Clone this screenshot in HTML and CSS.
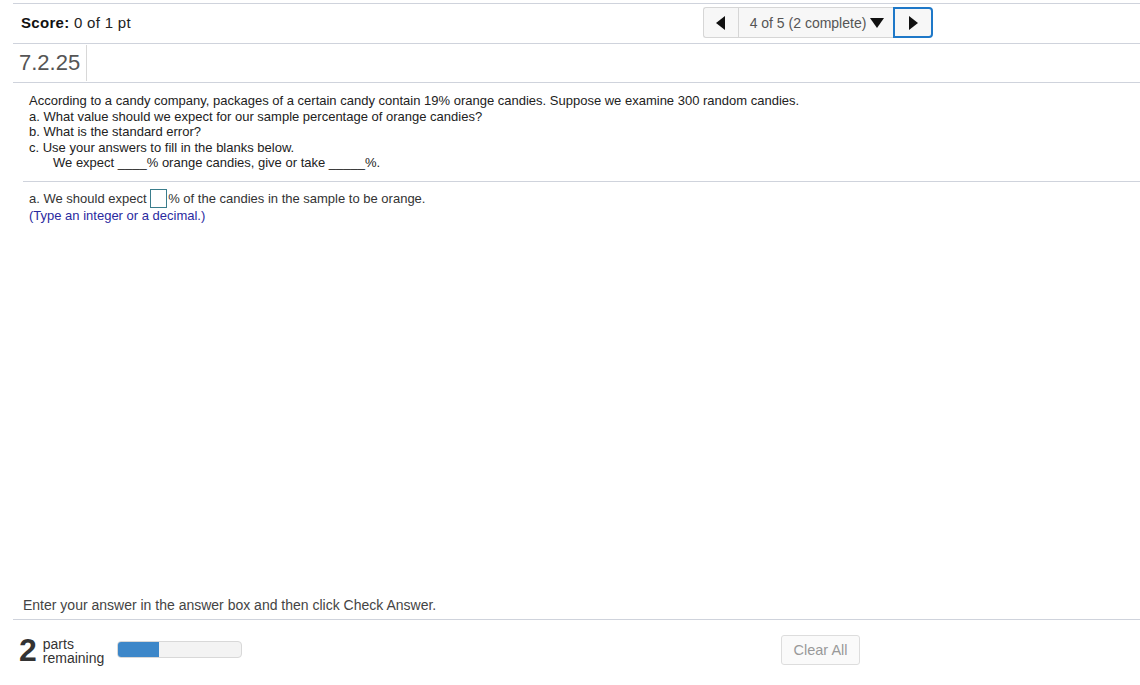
FILE: index.html
```html
<!DOCTYPE html>
<html lang="en">
<head>
  <meta charset="UTF-8">
  <title>Question 7.2.25</title>
  <link rel="stylesheet" href="styles.css">
</head>
<body>
  <div class="page">
    <div class="top-bar">
      <div class="score"><strong>Score:</strong> 0 of 1 pt</div>
      <div class="nav">
        <button class="nav-btn prev" aria-label="Previous question">
          <svg width="10" height="14" viewBox="0 0 10 14"><path d="M9 0 L9 14 L0 7 Z" fill="#111"/></svg>
        </button>
        <button class="nav-menu">4 of 5 (2 complete)
          <svg width="14" height="10" viewBox="0 0 14 10"><path d="M0 0 L14 0 L7 10 Z" fill="#111"/></svg>
        </button>
        <button class="nav-btn next" aria-label="Next question">
          <svg width="10" height="14" viewBox="0 0 10 14"><path d="M1 0 L1 14 L10 7 Z" fill="#111"/></svg>
        </button>
      </div>
    </div>

    <div class="qid-bar">
      <div class="qid">7.2.25</div>
    </div>

    <div class="question">
      <div class="stem">
        <p>According to a candy company, packages of a certain candy contain 19% orange candies. Suppose we examine 300 random candies.</p>
        <p>a. What value should we expect for our sample percentage of orange candies?</p>
        <p>b. What is the standard error?</p>
        <p>c. Use your answers to fill in the blanks below.</p>
        <p class="indent">We expect ____% orange candies, give or take _____%.</p>
      </div>
      <div class="answer">
        <p>a. We should expect <span class="ans-box"></span>% of the candies in the sample to be orange.</p>
        <p class="hint">(Type an integer or a decimal.)</p>
      </div>
    </div>

    <div class="instructions">Enter your answer in the answer box and then click Check Answer.</div>

    <div class="footer">
      <div class="parts">
        <span class="parts-num">2</span>
        <span class="parts-label">parts<br>remaining</span>
      </div>
      <div class="progress"><div class="progress-fill" style="width: 33%"></div></div>
      <button class="clear-btn">Clear All</button>
    </div>
  </div>
</body>
</html>
```

FILE: styles.css
```css
* { box-sizing: border-box; }

body {
  margin: 0;
  background: #ffffff;
  font-family: 'Liberation Sans', Arial, sans-serif;
  color: #222;
}

p { margin: 0; }

.page {
  display: flex;
  flex-direction: column;
  height: 685px;
  margin-left: 13px;
  padding-top: 3px;
}

.top-bar {
  display: flex;
  justify-content: space-between;
  align-items: center;
  height: 41px;
  border-top: 1px solid #cfd3dc;
  border-bottom: 1px solid #cfd3dc;
}

.score {
  padding-left: 8px;
  font-size: 15px;
  letter-spacing: 0.3px;
  color: #222;
  margin-top: -2px;
}

.score strong {
  font-weight: bold;
  color: #111;
}

.nav {
  display: flex;
  height: 31px;
  margin-right: 207px;
  margin-top: -2px;
}

.nav button {
  font-family: 'Liberation Sans', Arial, sans-serif;
  background: #f7f7f7;
  border: 1px solid #d6d6d6;
  height: 31px;
  display: flex;
  align-items: center;
  justify-content: center;
  cursor: pointer;
  padding: 0;
}

.nav-btn.prev {
  width: 35px;
  border-radius: 3px 0 0 3px;
  border-right: none;
}

.nav-menu {
  width: 155px;
  font-size: 14px;
  color: #555;
  gap: 4px;
  border-right: none !important;
  padding-left: 2px !important;
}

.nav-btn.next {
  width: 40px;
  border: 2px solid #1e78c8 !important;
  border-radius: 0 4px 4px 0;
}

.qid-bar {
  height: 39px;
  border-bottom: 1px solid #cfd3dc;
  display: flex;
  align-items: center;
}

.qid {
  font-size: 22px;
  color: #555;
  padding-left: 6px;
  width: 74px;
  height: 36px;
  line-height: 36px;
  border-right: 1px solid #d8d8d8;
}

.question {
  flex: 1;
  font-size: 13px;
}

.stem {
  padding: 10px 0 10px 6px;
  margin-left: 10px;
  line-height: 15.6px;
  color: #222;
  border-bottom: 1px solid #cfd3dc;
}

.indent {
  padding-left: 24px;
}

.answer {
  padding: 7px 0 0 16px;
  line-height: 19px;
  color: #333;
}

.ans-box {
  display: inline-block;
  width: 17px;
  height: 19px;
  border: 1px solid #3a7d8c;
  margin: 0 1px 0 0;
  vertical-align: -5px;
}

.hint {
  color: #2a2aa0;
  line-height: 15px;
}

.instructions {
  font-size: 14px;
  color: #444;
  padding-left: 10px;
  padding-bottom: 6px;
}

.footer {
  display: flex;
  align-items: center;
  height: 66px;
  border-top: 1px solid #cfd3dc;
  padding-bottom: 6px;
}

.parts {
  display: flex;
  align-items: center;
  padding-left: 6px;
  width: 104px;
  color: #333;
}

.parts-num {
  font-size: 32px;
  font-weight: bold;
  line-height: 30px;
  margin-right: 6px;
}

.parts-label {
  font-size: 14px;
  line-height: 14px;
  margin-top: 2px;
}

.progress {
  width: 125px;
  height: 17px;
  background: #f3f3f3;
  border: 1px solid #d8d8d8;
  border-radius: 4px;
  overflow: hidden;
}

.progress-fill {
  height: 100%;
  background: #3d87c9;
}

.clear-btn {
  margin-left: 539px;
  width: 79px;
  height: 30px;
  background: #fafafa;
  border: 1px solid #dddddd;
  border-radius: 3px;
  color: #999;
  font-family: 'Liberation Sans', Arial, sans-serif;
  font-size: 14.5px;
  cursor: pointer;
}
```
